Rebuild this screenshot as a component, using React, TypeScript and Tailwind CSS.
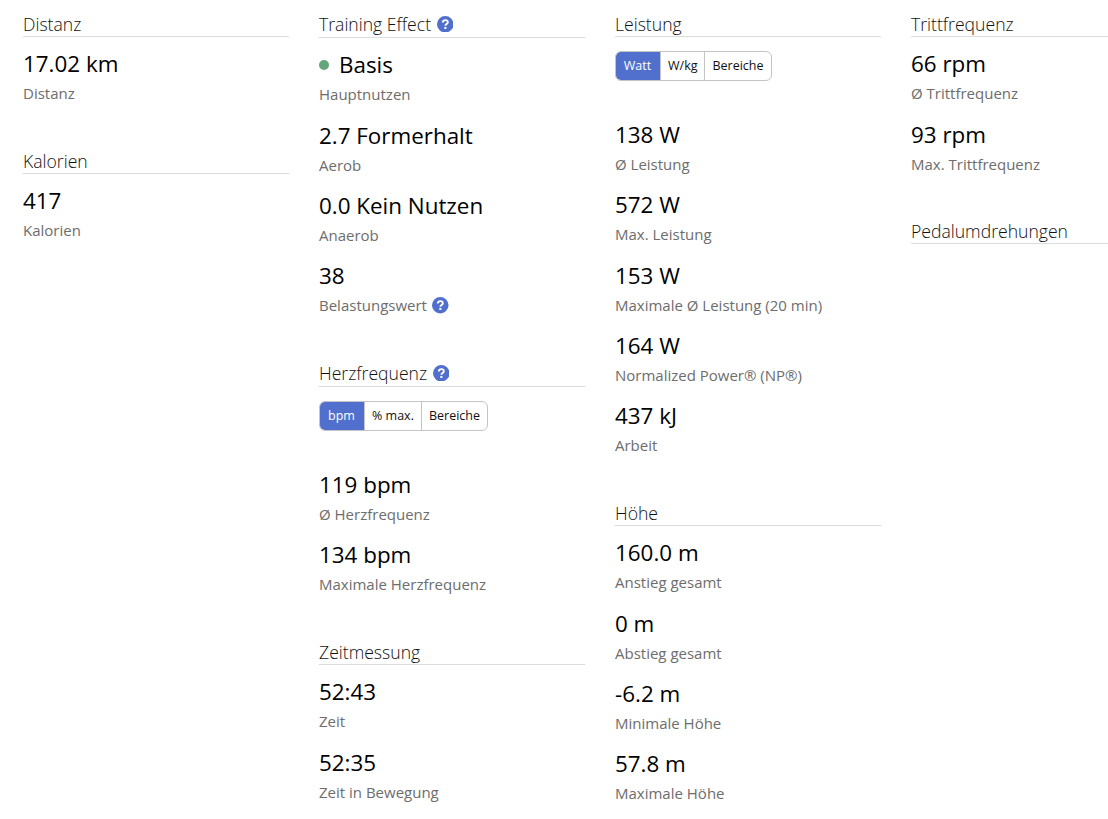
const font = { fontFamily: '"Open Sans", sans-serif' };

function Help() {
  return (
    <svg viewBox="0 0 16 16" className="ml-[5.5px] h-[16.5px] w-[16.5px] shrink-0">
      <circle cx="8" cy="8" r="8" fill="#5170cd" />
      <path d="M5.6 6.2c0-1.4 1-2.2 2.5-2.2s2.4.8 2.4 2c0 1.9-2.4 1.8-2.4 3.5" fill="none" stroke="#fff" strokeWidth="1.8" />
      <rect x="7.1" y="10.6" width="2" height="2" fill="#fff" />
    </svg>
  );
}

function Heading({ title, help }: { title: string; help?: boolean }) {
  return (
    <div
      className={
        help
          ? "flex h-[38px] items-center border-b border-[#dcdcdc] pt-[12px] pb-[1px] text-[17.6px] leading-[24px] font-light text-[#111]"
          : "flex h-[37px] items-center border-b border-[#dcdcdc] pt-[12px] text-[17.6px] leading-[24px] font-light text-[#111]"
      }
    >
      {title}
      {help && <Help />}
    </div>
  );
}

function Stat({ value, label, help, dot }: { value: string; label: string; help?: boolean; dot?: boolean }) {
  return (
    <div className="h-[70.33px] pt-[9.4px]">
      <div className="flex h-[36px] items-center text-[22.4px] leading-[36px] text-black">
        {dot && <span className="mr-[10px] h-[10px] w-[10px] rounded-full bg-[#63a67c]" />}
        {value}
      </div>
      <div className="mt-[1px] flex items-center text-[15px] leading-[20px] text-[#6d6d6d]">
        {label}
        {help && <Help />}
      </div>
    </div>
  );
}

function Toggle({ items }: { items: string[] }) {
  return (
    <div className="mt-[14px] mb-[26.7px] flex h-[30px] w-fit overflow-hidden rounded-[6px] border border-[#c4c4c4] text-[12.5px] text-[#111]">
      {items.map((t, i) => (
        <span
          key={t}
          className={
            i === 0
              ? "-my-px -ml-px flex w-[45px] items-center justify-center bg-[#5170cd] text-white"
              : "flex items-center border-l border-[#c4c4c4] px-[7px]"
          }
        >
          {t}
        </span>
      ))}
    </div>
  );
}

export default function App() {
  return (
    <div className="h-[819px] w-[1108px] overflow-hidden bg-white" style={font}>
      <div className="flex gap-[30px] pl-[23px]">
        <div className="w-[266px] shrink-0">
          <Heading title="Distanz" />
          <Stat value="17.02 km" label="Distanz" />
          <div className="h-[29.67px]" />
          <Heading title="Kalorien" />
          <Stat value="417" label="Kalorien" />
        </div>
        <div className="w-[266px] shrink-0">
          <Heading title="Training Effect" help />
          <Stat value="Basis" label="Hauptnutzen" dot />
          <Stat value="2.7 Formerhalt" label="Aerob" />
          <Stat value="0.0 Kein Nutzen" label="Anaerob" />
          <Stat value="38" label="Belastungswert" help />
          <div className="h-[29.67px]" />
          <Heading title="Herzfrequenz" help />
          <Toggle items={["bpm", "% max.", "Bereiche"]} />
          <Stat value="119 bpm" label="Ø Herzfrequenz" />
          <Stat value="134 bpm" label="Maximale Herzfrequenz" />
          <div className="h-[29.67px]" />
          <Heading title="Zeitmessung" />
          <Stat value="52:43" label="Zeit" />
          <Stat value="52:35" label="Zeit in Bewegung" />
        </div>
        <div className="w-[266px] shrink-0">
          <Heading title="Leistung" />
          <Toggle items={["Watt", "W/kg", "Bereiche"]} />
          <Stat value="138 W" label="Ø Leistung" />
          <Stat value="572 W" label="Max. Leistung" />
          <Stat value="153 W" label="Maximale Ø Leistung (20 min)" />
          <Stat value="164 W" label="Normalized Power® (NP®)" />
          <Stat value="437 kJ" label="Arbeit" />
          <div className="h-[29.67px]" />
          <Heading title="Höhe" />
          <Stat value="160.0 m" label="Anstieg gesamt" />
          <Stat value="0 m" label="Abstieg gesamt" />
          <Stat value="-6.2 m" label="Minimale Höhe" />
          <Stat value="57.8 m" label="Maximale Höhe" />
        </div>
        <div className="w-[266px] shrink-0">
          <Heading title="Trittfrequenz" />
          <Stat value="66 rpm" label="Ø Trittfrequenz" />
          <Stat value="93 rpm" label="Max. Trittfrequenz" />
          <div className="h-[29.67px]" />
          <Heading title="Pedalumdrehungen" />
        </div>
      </div>
    </div>
  );
}
